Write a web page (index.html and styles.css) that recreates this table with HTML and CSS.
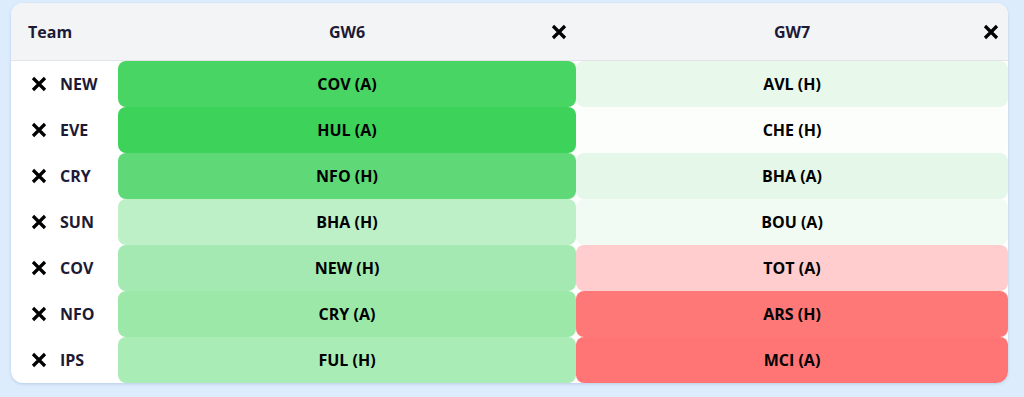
FILE: index.html
```html
<!DOCTYPE html>
<html lang="en">
<head>
<meta charset="utf-8">
<title>Fixtures</title>
<link rel="stylesheet" href="styles.css">
</head>
<body>
<div class="card">
  <div class="grid">
    <div class="hcell team-h">Team</div>
    <div class="hcell gw-h">GW6<button class="x hx" aria-label="remove GW6"><svg viewBox="0 0 16 16"><path d="M2 2L14 14M14 2L2 14"/></svg></button></div>
    <div class="hcell gw-h">GW7<button class="x hx" aria-label="remove GW7"><svg viewBox="0 0 16 16"><path d="M2 2L14 14M14 2L2 14"/></svg></button></div>

    <div class="team"><span class="x"><svg viewBox="0 0 16 16"><path d="M2 2L14 14M14 2L2 14"/></svg></span>NEW</div>
    <div class="fx c-cov">COV (A)</div>
    <div class="fx c-avl">AVL (H)</div>

    <div class="team"><span class="x"><svg viewBox="0 0 16 16"><path d="M2 2L14 14M14 2L2 14"/></svg></span>EVE</div>
    <div class="fx c-hul">HUL (A)</div>
    <div class="fx c-che">CHE (H)</div>

    <div class="team"><span class="x"><svg viewBox="0 0 16 16"><path d="M2 2L14 14M14 2L2 14"/></svg></span>CRY</div>
    <div class="fx c-nfo">NFO (H)</div>
    <div class="fx c-bhaa">BHA (A)</div>

    <div class="team"><span class="x"><svg viewBox="0 0 16 16"><path d="M2 2L14 14M14 2L2 14"/></svg></span>SUN</div>
    <div class="fx c-bhah">BHA (H)</div>
    <div class="fx c-bou">BOU (A)</div>

    <div class="team"><span class="x"><svg viewBox="0 0 16 16"><path d="M2 2L14 14M14 2L2 14"/></svg></span>COV</div>
    <div class="fx c-new">NEW (H)</div>
    <div class="fx c-tot">TOT (A)</div>

    <div class="team"><span class="x"><svg viewBox="0 0 16 16"><path d="M2 2L14 14M14 2L2 14"/></svg></span>NFO</div>
    <div class="fx c-cry">CRY (A)</div>
    <div class="fx c-ars">ARS (H)</div>

    <div class="team"><span class="x"><svg viewBox="0 0 16 16"><path d="M2 2L14 14M14 2L2 14"/></svg></span>IPS</div>
    <div class="fx c-ful">FUL (H)</div>
    <div class="fx c-mci">MCI (A)</div>
  </div>
</div>
</body>
</html>
```

FILE: styles.css
```css
* { box-sizing: border-box; }
html, body { height: 100%; }
body {
  margin: 0;
  padding: 3px 16px 14px 11px;
  background: #dcecfd;
  font-family: "Open Sans", "Noto Sans", sans-serif;
}
.card {
  background: #ffffff;
  border-radius: 12px;
  overflow: hidden;
  box-shadow: 0 1px 3px rgba(30, 60, 120, 0.18);
}
.grid {
  display: grid;
  grid-template-columns: 107px 458px 1fr;
  grid-template-rows: 58px;
  grid-auto-rows: 46px;
}
.hcell {
  background: #f3f4f6;
  border-bottom: 1px solid #e2e4e8;
  display: flex;
  align-items: center;
  font-weight: 700;
  font-size: 16px;
  color: #1c1a35;
}
.team-h { padding-left: 17px; }
.gw-h {
  justify-content: center;
  position: relative;
}
.x {
  display: inline-flex;
  width: 16px;
  height: 16px;
}
.x svg { width: 16px; height: 16px; }
.x path {
  stroke: #000;
  stroke-width: 3.2;
  fill: none;
}
.hx {
  position: absolute;
  right: 9px;
  top: 21px;
  border: 0;
  background: none;
  padding: 0;
  cursor: pointer;
}
.team {
  display: flex;
  align-items: center;
  gap: 13px;
  padding-left: 20px;
  font-weight: 700;
  font-size: 16px;
  color: #1c1a35;
}
.fx {
  display: flex;
  align-items: center;
  justify-content: center;
  border-radius: 8px;
  font-weight: 700;
  font-size: 16px;
  color: #000;
}
.c-cov { background: #48d563; }
.c-hul { background: #3dd25a; }
.c-nfo { background: #5fd977; }
.c-bhah { background: #bdf0c7; }
.c-new { background: #a3e9b1; }
.c-cry { background: #9ce8a9; }
.c-ful { background: #aaecb6; }
.c-avl { background: #e8f9ec; }
.c-che { background: #fbfefb; }
.c-bhaa { background: #e4f7e8; }
.c-bou { background: #f1fbf3; }
.c-tot { background: #ffcdcd; }
.c-ars { background: #ff7878; }
.c-mci { background: #ff7575; }
```
